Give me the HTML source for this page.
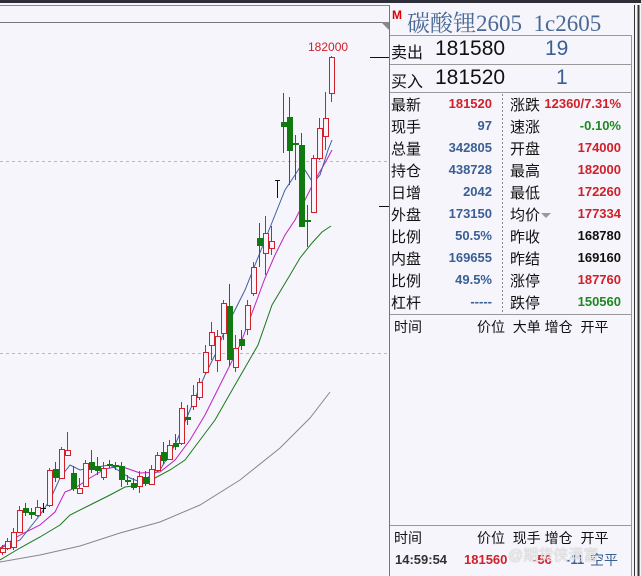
<!DOCTYPE html>
<html><head><meta charset="utf-8"><style>
body{margin:0;width:641px;height:576px;overflow:hidden;background:#f5f5fb;font-family:"Liberation Sans","Noto Sans CJK SC",sans-serif;position:relative}
.a{position:absolute;white-space:nowrap}
.l{font-size:15px;color:#111}
.v{font-size:13px;font-weight:bold;text-align:right}
.r{color:#d0202a}.b{color:#3a5f95}.g{color:#1d8a1d}.k{color:#111}
</style></head><body>
<div class="a" style="left:0;top:0;width:641px;height:3px;background:#2e2e38"></div>
<div class="a" style="left:0;top:5px;width:389px;height:1px;background:#888"></div>
<div class="a" style="left:0;top:22px;width:389px;height:1px;background:#777"></div>
<svg class="a" style="left:0;top:0" width="641" height="576" id="s">
<line x1="0" y1="161.5" x2="388" y2="161.5" stroke="#bbb" stroke-dasharray="3,3"/>
<line x1="0" y1="353.5" x2="388" y2="353.5" stroke="#bbb" stroke-dasharray="3,3"/>
<line x1="370" y1="57.5" x2="389" y2="57.5" stroke="#111"/>
<line x1="379" y1="206.5" x2="389" y2="206.5" stroke="#111"/>
<polyline fill="none" stroke="#888" stroke-width="1" points="0,562 40,555 80,546 120,533 160,522 200,505 240,480 280,448 310,418 330,392"/>
<polyline fill="none" stroke="#1a7a1a" stroke-width="1" points="0,560 20,548 40,537 60,525 70,515 90,505 110,495 125,487 140,485 155,478 170,470 185,460 200,440 215,420 235,385 258,345 272,305 290,275 300,258 312,243 322,232 331,226"/>
<polyline fill="none" stroke="#c020c0" stroke-width="1" points="0,548 20,535 40,525 55,512 65,492 75,488 90,478 105,469 120,466 140,473 160,472 175,460 190,440 205,415 220,385 240,345 255,305 265,278 275,255 285,235 295,220 305,200 315,180 325,163 332,150"/>
<polyline fill="none" stroke="#4060a0" stroke-width="1" points="0,548 20,540 40,515 50,500 60,478 70,465 80,470 90,468 110,465 130,478 140,482 150,476 160,470 175,445 190,410 205,375 215,355 225,330 235,310 245,290 255,265 265,240 275,215 285,190 295,175 300,167 305,170 313,183 320,175 328,150 332,140"/>
<g id="c"></g>
<text x="308" y="51" font-size="12" fill="#d0202a" font-family="Liberation Sans">182000</text>
<line x1="389.5" y1="5" x2="389.5" y2="576" stroke="#777"/>
<line x1="631.5" y1="35" x2="631.5" y2="576" stroke="#999"/>
<line x1="634.5" y1="5" x2="634.5" y2="576" stroke="#333"/>
<line x1="638.5" y1="5" x2="638.5" y2="576" stroke="#333" stroke-width="2"/>
<line x1="390" y1="35.5" x2="632" y2="35.5" stroke="#999"/>
<line x1="390" y1="64.5" x2="632" y2="64.5" stroke="#999"/>
<line x1="390" y1="92.5" x2="632" y2="92.5" stroke="#999"/>
<line x1="390" y1="314.5" x2="632" y2="314.5" stroke="#999"/>
<line x1="390" y1="525.5" x2="632" y2="525.5" stroke="#999"/>
<line x1="502.5" y1="94" x2="502.5" y2="312" stroke="#888" stroke-dasharray="2,2"/>
<polygon points="381,22 389,22 389,30" fill="#888"/>
</svg>
<script>
var d=[[2,548,552,545,555,'r'],[7,541,548,538,550,'r'],[13,532,547,528,550,'r'],[19,510,532,506,533,'r'],[25,508,513,503,516,'g'],[31,512,515,508,519,'g'],[37,507,515,500,517,'r'],[43,508,509,503,513,'k'],[49,470,505,468,507,'r'],[55,469,478,462,482,'g'],[61,449,478,447,479,'r'],[67,450,455,432,456,'r'],[73,473,489,466,491,'g'],[79,488,493,478,494,'r'],[85,463,486,460,487,'r'],[91,462,470,450,473,'g'],[97,466,471,457,475,'g'],[103,468,477,462,480,'r'],[109,464,466,460,468,'g'],[115,465,467,462,470,'g'],[121,466,480,462,487,'g'],[127,480,482,475,485,'g'],[133,483,488,478,490,'g'],[139,476,486,471,493,'r'],[145,477,484,471,486,'g'],[151,469,484,465,485,'r'],[157,455,470,452,472,'r'],[163,452,461,442,464,'g'],[169,445,459,440,460,'r'],[175,443,447,434,450,'g'],[181,408,443,402,445,'r'],[187,417,420,405,425,'g'],[193,395,406,385,410,'r'],[199,382,397,378,400,'r'],[205,352,372,345,374,'r'],[211,332,345,322,360,'r'],[217,336,360,330,372,'r'],[223,303,333,300,340,'r'],[229,306,360,284,366,'g'],[235,348,367,335,372,'r'],[241,339,346,330,350,'g'],[247,305,329,300,335,'r'],[253,267,293,262,296,'r'],[259,238,246,223,267,'g'],[265,233,253,216,275,'r'],[271,241,248,226,255,'r'],[277,180,181,180,198,'k'],[283,122,127,93,153,'g'],[289,117,151,97,185,'g'],[295,143,145,135,180,'g'],[301,145,227,133,227,'g'],[307,220,222,205,247,'g'],[313,158,212,155,213,'r'],[319,128,158,118,160,'r'],[325,118,136,92,150,'r'],[331,57,93,56,102,'r']];
var h='';d.forEach(function(c){var x=c[0],col=c[5]=='r'?'#d0202a':c[5]=='g'?'#107a10':'#111';
h+='<line x1="'+(x+.5)+'" y1="'+c[3]+'" x2="'+(x+.5)+'" y2="'+c[4]+'" stroke="'+col+'"/>';
if(c[5]=='r')h+='<rect x="'+(x-1.5)+'" y="'+(c[1]+.5)+'" width="5" height="'+(c[2]-c[1])+'" fill="#f5f5fb" stroke="'+col+'"/>';
else if(c[5]=='g')h+='<rect x="'+(x-2)+'" y="'+c[1]+'" width="6" height="'+Math.max(2,c[2]-c[1])+'" fill="'+col+'"/>';
else h+='<line x1="'+(x-2)+'" y1="'+(c[1]+.5)+'" x2="'+(x+3)+'" y2="'+(c[1]+.5)+'" stroke="'+col+'"/>';});
document.getElementById('c').innerHTML=h;
</script>
<div class="a" style="left:392px;top:8px;font-size:12px;font-weight:bold;color:#d00">M</div>
<div class="a" style="left:407px;top:5px;font-size:23px;color:#4a6a95;font-family:'Liberation Serif','Noto Serif CJK SC',serif">碳酸锂2605&nbsp;&nbsp;1c2605</div>
<div class="a l" style="left:391px;top:39px;font-size:16px">卖出</div>
<div class="a" style="left:435px;top:37px;font-size:21px;color:#111">181580</div>
<div class="a" style="left:545px;top:37px;font-size:21px;color:#3a5f95">19</div>
<div class="a l" style="left:391px;top:68px;font-size:16px">买入</div>
<div class="a" style="left:435px;top:66px;font-size:21px;color:#111">181520</div>
<div class="a" style="left:556px;top:66px;font-size:21px;color:#3a5f95">1</div>
<div class="a" style="left:0;top:0" id="rows"></div>
<script>
var L=[['最新','181520','r','涨跌','12360/7.31%','r'],['现手','97','b','速涨','-0.10%','g'],['总量','342805','b','开盘','174000','r'],['持仓','438728','b','最高','182000','r'],['日增','2042','b','最低','172260','r'],['外盘','173150','b','均价','177334','r'],['比例','50.5%','b','昨收','168780','k'],['内盘','169655','b','昨结','169160','k'],['比例','49.5%','b','涨停','187760','r'],['杠杆','-----','b','跌停','150560','g']];
var s='';L.forEach(function(r,i){var t=94+i*22;
s+='<div class="a l" style="left:391px;top:'+t+'px">'+r[0]+'</div><div class="a v '+r[2]+'" style="left:430px;width:62px;top:'+(t+2)+'px">'+r[1]+'</div><div class="a l" style="left:510px;top:'+t+'px">'+r[3]+'</div><div class="a v '+r[5]+'" style="left:530px;width:91px;top:'+(t+2)+'px">'+r[4]+'</div>';});
document.getElementById('rows').innerHTML=s;
</script>
<div class="a" style="left:541px;top:213px;width:0;height:0;border-left:5px solid transparent;border-right:5px solid transparent;border-top:5px solid #999"></div>
<div class="a l" style="left:394px;top:317px;font-size:14px">时间</div>
<div class="a l" style="left:477px;top:317px;font-size:14px">价位&nbsp;&nbsp;大单&nbsp;增仓&nbsp;&nbsp;开平</div>
<div class="a l" style="left:394px;top:528px;font-size:14px">时间</div>
<div class="a l" style="left:477px;top:528px;font-size:14px">价位&nbsp;&nbsp;现手&nbsp;增仓&nbsp;&nbsp;开平</div>
<div class="a v k" style="left:395px;top:552px;color:#333">14:59:54</div>
<div class="a v r" style="left:464px;top:552px">181560</div>
<div class="a v r" style="left:533px;top:552px">-56</div>
<div class="a v b" style="left:566px;top:552px">-11</div>
<div class="a" style="left:590px;top:550px;font-size:14px;color:#3a5f95">空平</div>
<div class="a" style="left:508px;top:544px;font-size:15px;color:rgba(255,255,255,.75);text-shadow:0 0 1px #999">@期货侠满富</div>
</body></html>
